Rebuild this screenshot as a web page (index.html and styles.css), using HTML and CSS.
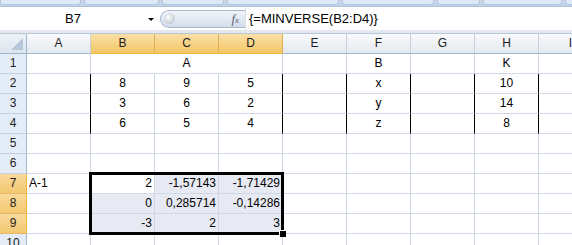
FILE: index.html
```html
<!DOCTYPE html>
<html lang="en">
<head>
    <meta charset="UTF-8">
    <title>MINVERSE</title>
    <link rel="stylesheet" href="styles.css">
</head>
<body>
    <!-- Bottom edge of the ribbon -->
    <div class="ribbon-edge">
        <span class="group" style="width: 79px"></span>
        <span class="group" style="width: 73px"></span>
        <span class="group" style="width: 60px"></span>
        <span class="group" style="width: 110px"></span>
        <span class="group" style="width: 90px"></span>
        <span class="group" style="width: 41px"></span>
        <span class="group" style="width: 77px"></span>
        <span class="group" style="width: 30px"></span>
    </div>

    <!-- Formula bar -->
    <div class="formula-bar">
        <div class="name-box">
            <span class="name">B7</span>
            <span class="arrow"></span>
        </div>
        <div class="fx-area">
            <span class="grip"></span>
            <span class="fx">f<small>x</small></span>
        </div>
        <div class="formula">{=MINVERSE(B2:D4)}</div>
    </div>
    <div class="sheet-gap"></div>

    <!-- Worksheet -->
    <div class="sheet-view">
    <div class="sheet">
        <div class="corner"><span class="tri"></span></div>
        <div class="col-head">A</div>
        <div class="col-head sel">B</div>
        <div class="col-head sel">C</div>
        <div class="col-head sel">D</div>
        <div class="col-head">E</div>
        <div class="col-head">F</div>
        <div class="col-head">G</div>
        <div class="col-head">H</div>
        <div class="col-head">I</div>

        <div class="row-head">1</div>
        <div class="cell"></div>
        <div class="cell center merged">A</div>
        <div class="cell"></div>
        <div class="cell center">B</div>
        <div class="cell"></div>
        <div class="cell center">K</div>
        <div class="cell"></div>

        <div class="row-head">2</div>
        <div class="cell edge"></div>
        <div class="cell center">8</div>
        <div class="cell center">9</div>
        <div class="cell center edge">5</div>
        <div class="cell edge"></div>
        <div class="cell center edge">x</div>
        <div class="cell edge"></div>
        <div class="cell center edge">10</div>
        <div class="cell"></div>

        <div class="row-head">3</div>
        <div class="cell edge"></div>
        <div class="cell center">3</div>
        <div class="cell center">6</div>
        <div class="cell center edge">2</div>
        <div class="cell edge"></div>
        <div class="cell center edge">y</div>
        <div class="cell edge"></div>
        <div class="cell center edge">14</div>
        <div class="cell"></div>

        <div class="row-head">4</div>
        <div class="cell edge"></div>
        <div class="cell center">6</div>
        <div class="cell center">5</div>
        <div class="cell center edge">4</div>
        <div class="cell edge"></div>
        <div class="cell center edge">z</div>
        <div class="cell edge"></div>
        <div class="cell center edge">8</div>
        <div class="cell"></div>

        <div class="row-head">5</div>
        <div class="cell"></div><div class="cell"></div><div class="cell"></div><div class="cell"></div>
        <div class="cell"></div><div class="cell"></div><div class="cell"></div><div class="cell"></div><div class="cell"></div>

        <div class="row-head">6</div>
        <div class="cell"></div><div class="cell"></div><div class="cell"></div><div class="cell"></div>
        <div class="cell"></div><div class="cell"></div><div class="cell"></div><div class="cell"></div><div class="cell"></div>

        <div class="row-head sel">7</div>
        <div class="cell">A-1</div>
        <div class="cell num">2</div>
        <div class="cell num in-range">-1,57143</div>
        <div class="cell num in-range">-1,71429</div>
        <div class="cell"></div><div class="cell"></div><div class="cell"></div><div class="cell"></div><div class="cell"></div>

        <div class="row-head sel">8</div>
        <div class="cell"></div>
        <div class="cell num in-range">0</div>
        <div class="cell num in-range">0,285714</div>
        <div class="cell num in-range">-0,14286</div>
        <div class="cell"></div><div class="cell"></div><div class="cell"></div><div class="cell"></div><div class="cell"></div>

        <div class="row-head sel">9</div>
        <div class="cell"></div>
        <div class="cell num in-range">-3</div>
        <div class="cell num in-range">2</div>
        <div class="cell num in-range">3</div>
        <div class="cell"></div><div class="cell"></div><div class="cell"></div><div class="cell"></div><div class="cell"></div>

        <div class="row-head">10</div>
        <div class="cell"></div><div class="cell"></div><div class="cell"></div><div class="cell"></div>
        <div class="cell"></div><div class="cell"></div><div class="cell"></div><div class="cell"></div><div class="cell"></div>

        <!-- Selection frame over B7:D9 -->
        <div class="selection"><span class="handle"></span></div>
    </div>
    </div>
</body>
</html>
```

FILE: styles.css
```css
/* General styles */
body {
    margin: 0;
    padding: 0;
    overflow: hidden;
    background-color: #ffffff;
    font-family: "Liberation Sans", Arial, sans-serif;
    color: #000;
}

/* Ribbon bottom edge */
.ribbon-edge {
    display: flex;
    gap: 3px;
    height: 6px;
    background-color: #c4d5ea;
    overflow: hidden;
}

.ribbon-edge .group {
    flex: none;
    height: 4px;
    background-color: #dfe9f5;
    border: 1px solid #b2c6de;
    border-top: none;
    border-radius: 0 0 3px 3px;
}

/* Formula bar */
.formula-bar {
    display: flex;
    align-items: center;
    height: 23px;
    background-color: #ffffff;
    border-top: 1px solid #a9bfd6;
}

.name-box {
    width: 158px;
    height: 100%;
    display: flex;
    align-items: center;
    position: relative;
    font-size: 13px;
}

.name-box .name {
    margin-left: 65px;
}

.name-box .arrow {
    position: absolute;
    left: 148px;
    top: 11px;
    border-left: 3px solid transparent;
    border-right: 3px solid transparent;
    border-top: 3px solid #000;
}

.fx-area {
    width: 85px;
    height: 18px;
    margin-left: 2px;
    display: flex;
    align-items: center;
    justify-content: space-between;
    background: linear-gradient(#f1f5fa, #d3deeb);
    border: 1px solid #a7b8cd;
    border-right: none;
    border-radius: 9px 0 0 9px;
    padding: 0 6px 0 3px;
    box-sizing: border-box;
}

.grip {
    width: 11px;
    height: 11px;
    border-radius: 50%;
    background: radial-gradient(circle at 40% 40%, #ffffff, #aab6c4);
}

.fx {
    font-family: "Liberation Serif", serif;
    font-style: italic;
    font-size: 13px;
    color: #5b6470;
}

.fx small {
    font-size: 9px;
}

.formula {
    flex: 1;
    height: 100%;
    display: flex;
    align-items: center;
    padding-left: 3px;
    font-size: 13px;
    border-left: 1px solid #d5dde7;
}

.sheet-gap {
    height: 3px;
    background-color: #e3e8ee;
    border-bottom: 1px solid #b8c7d8;
}

/* Worksheet grid */
.sheet-view {
    width: 100%;
    overflow: hidden;
}

.sheet {
    position: relative;
    display: grid;
    grid-template-columns: 27px repeat(9, 64px);
    grid-auto-rows: 20px;
    width: 603px;
    font-size: 12px;
}

.sheet > div {
    box-sizing: border-box;
    line-height: 19px;
    white-space: nowrap;
    overflow: hidden;
}

.cell {
    border-right: 1px solid #d0d7e5;
    border-bottom: 1px solid #d0d7e5;
    padding: 0 2px;
}

.cell.center {
    text-align: center;
}

.cell.num {
    text-align: right;
}

.cell.merged {
    grid-column: span 3;
}

/* Matrix brackets drawn as cell borders */
.cell.edge {
    border-right-color: #000;
}

.cell.in-range {
    background-color: #e7eaf3;
}

/* Headers */
.corner {
    background: linear-gradient(#eef2f7, #dde5ef);
    border-right: 1px solid #9eb6ce;
    border-bottom: 1px solid #9eb6ce;
    position: relative;
}

.corner .tri {
    position: absolute;
    right: 3px;
    bottom: 3px;
    border-left: 12px solid transparent;
    border-bottom: 12px solid #b7c7da;
}

.col-head {
    text-align: center;
    color: #1e1e1e;
    background: linear-gradient(#f9fafc, #e4e9f0);
    border-right: 1px solid #c6d0dc;
    border-bottom: 1px solid #9eb6ce;
}

.col-head.sel {
    background: linear-gradient(#fae0a8, #f2c666);
    border-right-color: #e0ad52;
    border-bottom-color: #f2b93b;
}

.row-head {
    text-align: center;
    color: #1e1e1e;
    background-color: #e4ecf7;
    border-right: 1px solid #9eb6ce;
    border-bottom: 1px solid #c5d2e2;
}

.row-head.sel {
    background: linear-gradient(#f9d99c, #f3c870);
    border-right-color: #f2b93b;
    border-bottom-color: #e8b664;
}

/* Selection frame and fill handle */
.selection {
    position: absolute;
    left: 89px;
    top: 138px;
    width: 195px;
    height: 63px;
    border: 3px solid #000;
    box-sizing: border-box;
    overflow: visible !important;
}

.handle {
    position: absolute;
    right: -5px;
    bottom: -5px;
    width: 6px;
    height: 6px;
    background-color: #000;
    border-left: 1px solid #fff;
    border-top: 1px solid #fff;
}
```
